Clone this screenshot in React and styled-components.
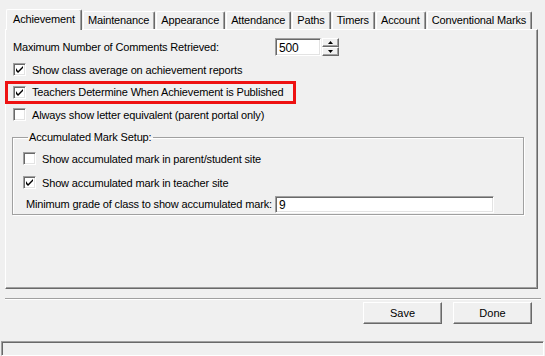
import React from "react"
import styled, {createGlobalStyle} from "styled-components"

// classic win32 settings dialog, Achievement tab

const Global = createGlobalStyle`
    body {
        margin: 0;
        background: #f0f0f0;
        font-family: "Liberation Sans", Arial, sans-serif;
        font-size: 11px;
        letter-spacing: -0.15px;
        color: #000;
    }
`

const Window = styled.div`
    width: 545px;
    height: 356px;
    display: flex;
    flex-direction: column;
    overflow: hidden;
`

const TabStrip = styled.div`
    display: flex;
    align-items: flex-end;
    height: 21px;
    margin-top: 8px;
    padding-left: 6px;
    position: relative;
    z-index: 1;
`

const Tab = styled.div`
    box-sizing: border-box;
    height: ${p => (p.$active ? "21px" : "18px")};
    margin-bottom: ${p => (p.$active ? "-1px" : "0")};
    padding: ${p => (p.$active ? "0 6px 1px" : "0 5px 0 4px")};
    margin-left: ${p => (p.$active ? "0" : "1px")};
    display: flex;
    align-items: center;
    background: #f0f0f0;
    border-top: 1px solid #fff;
    border-left: 1px solid #fff;
    border-right: 1px solid #696969;
    box-shadow: inset -1px 0 0 #a0a0a0;
    border-radius: 2px 2px 0 0;
    white-space: nowrap;
`

const Panel = styled.div`
    box-sizing: border-box;
    height: 261px;
    margin: 0 7px 0 5px;
    padding: 0 0 0 6px;
    border: 1px solid #fff;
    border-right-color: #696969;
    border-bottom-color: #696969;
    box-shadow: inset -1px -1px 0 #a0a0a0;
`

const FieldRow = styled.div`
    display: flex;
    align-items: center;
    height: 19px;
    margin-top: 8px;
    padding-left: 1px;
`

const Label = styled.span`
    width: ${p => p.$w}px;
    flex: none;
    white-space: nowrap;
`

const TextBox = styled.div`
    box-sizing: border-box;
    width: ${p => p.$w}px;
    height: ${p => p.$h || 18}px;
    background: #fff;
    border-top: 1px solid #a0a0a0;
    border-left: 1px solid #a0a0a0;
    border-right: 1px solid #fff;
    border-bottom: 1px solid #fff;
    box-shadow: inset 1px 1px 0 #696969, inset -1px -1px 0 #e3e3e3;
    padding: 1px 0 0 3px;
    display: flex;
    align-items: center;
    font-size: 12px;
`

const Spin = styled.div`
    display: flex;
    flex-direction: column;
    margin-left: 1px;
`

const SpinButton = styled.div`
    box-sizing: border-box;
    width: 17px;
    height: 9px;
    background: #f0f0f0;
    border: 1px solid #fff;
    border-right-color: #696969;
    border-bottom-color: #696969;
    box-shadow: inset -1px -1px 0 #a0a0a0;
    display: flex;
    align-items: center;
    justify-content: center;
`

const Arrow = ({up}) => (
    <svg width="5" height="3" viewBox="0 0 5 3">
        <path d={up ? "M2.5 0 L5 3 L0 3 Z" : "M0 0 L5 0 L2.5 3 Z"} fill="#000"/>
    </svg>
)

const CheckRow = styled.label`
    display: flex;
    align-items: center;
    gap: 6px;
    height: ${p => p.$h || 22}px;
    padding-left: ${p => p.$pad || 1}px;
    white-space: nowrap;
`

const Box = styled.span`
    box-sizing: border-box;
    width: 13px;
    height: 13px;
    flex: none;
    background: #fff;
    border-top: 1px solid #a0a0a0;
    border-left: 1px solid #a0a0a0;
    border-right: 1px solid #fff;
    border-bottom: 1px solid #fff;
    box-shadow: inset 1px 1px 0 #696969, inset -1px -1px 0 #e3e3e3;
    display: flex;
    align-items: center;
    justify-content: center;
`

const Check = ({checked}) => (
    <Box>
        {checked && (
            <svg width="7" height="7" viewBox="0 0 7 7">
                <path d="M0 2 L0 5 L2 7 L7 2 L7 0 L2 5 Z" fill="#000"/>
            </svg>
        )}
    </Box>
)

const Highlight = styled.div`
    box-sizing: border-box;
    width: 291px;
    height: 23px;
    margin: 0 0 0 -7px;
    border: 3px solid #ee1111;
    display: flex;
    align-items: center;
`

const Group = styled.fieldset`
    box-sizing: border-box;
    width: 512px;
    margin: 5px 0 0 0;
    padding: 3px 0 0 9px;
    border: 1px solid #a0a0a0;
    box-shadow: 1px 1px 0 #fff, inset 1px 1px 0 #fff;
    min-width: 0;
`

const Legend = styled.legend`
    padding: 0 1px;
    margin-left: 6px;
    line-height: 13px;
`

const GradeRow = styled.div`
    display: flex;
    align-items: center;
    height: 19px;
    padding-left: 4px;
`

const Separator = styled.div`
    margin: 9px 4px 0 5px;
    height: 0;
    border-top: 1px solid #a0a0a0;
    border-bottom: 1px solid #fff;
`

const Buttons = styled.div`
    display: flex;
    justify-content: flex-end;
    gap: 11px;
    margin: 2px 13px 0 0;
`

const Button = styled.button`
    box-sizing: border-box;
    width: ${p => p.$w}px;
    height: 22px;
    padding: 0;
    background: #f0f0f0;
    font: inherit;
    color: #000;
    border: 1px solid #fff;
    border-right-color: #696969;
    border-bottom-color: #696969;
    box-shadow: inset -1px -1px 0 #a0a0a0;
`

const StatusBar = styled.div`
    box-sizing: border-box;
    height: 15px;
    margin: 17px 1px 0 1px;
    border: 1px solid #a0a0a0;
    border-right-color: #fff;
    border-bottom-color: #fff;
    box-shadow: inset 1px 1px 0 #696969;
`

const tabs = ["Achievement", "Maintenance", "Appearance", "Attendance", "Paths", "Timers", "Account", "Conventional Marks"]

export default function App() {
    return (
        <Window>
            <Global/>
            <TabStrip>
                {tabs.map((t, i) => (
                    <Tab key={t} $active={i === 0}>{t}</Tab>
                ))}
            </TabStrip>
            <Panel>
                <FieldRow>
                    <Label $w={262}>Maximum Number of Comments Retrieved:</Label>
                    <TextBox $w={46}>500</TextBox>
                    <Spin>
                        <SpinButton><Arrow up/></SpinButton>
                        <SpinButton><Arrow/></SpinButton>
                    </Spin>
                </FieldRow>
                <CheckRow style={{marginTop: 2}}>
                    <Check checked/>
                    Show class average on achievement reports
                </CheckRow>
                <Highlight>
                    <CheckRow $h={17} $pad={5}>
                        <Check checked/>
                        Teachers Determine When Achievement is Published
                    </CheckRow>
                </Highlight>
                <CheckRow>
                    <Check/>
                    Always show letter equivalent (parent portal only)
                </CheckRow>
                <Group>
                    <Legend>Accumulated Mark Setup:</Legend>
                    <CheckRow $h={24}>
                        <Check/>
                        Show accumulated mark in parent/student site
                    </CheckRow>
                    <CheckRow $h={24}>
                        <Check checked/>
                        Show accumulated mark in teacher site
                    </CheckRow>
                    <GradeRow>
                        <Label $w={249}>Minimum grade of class to show accumulated mark:</Label>
                        <TextBox $w={219} $h={17}>9</TextBox>
                    </GradeRow>
                </Group>
            </Panel>
            <Separator/>
            <Buttons>
                <Button $w={79}>Save</Button>
                <Button $w={79}>Done</Button>
            </Buttons>
            <StatusBar/>
        </Window>
    )
}
